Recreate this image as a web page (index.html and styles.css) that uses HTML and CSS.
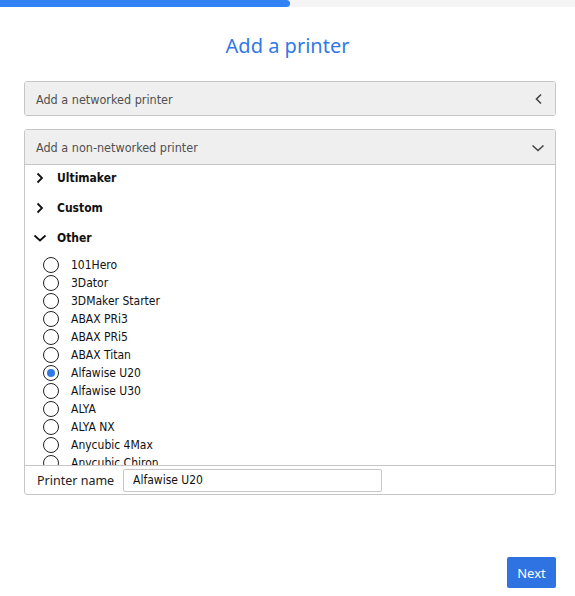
FILE: index.html
```html
<!DOCTYPE html>
<html>
<head>
<meta charset="utf-8">
<link rel="stylesheet" href="styles.css">
</head>
<body>
<div class="progress"><div class="progress-fill"></div></div>
<h1 class="title">Add a printer</h1>
<div class="content">
  <div class="section">
    <div class="section-header">
      <span>Add a networked printer</span>
      <svg class="chev" width="12" height="12" viewBox="0 0 12 12"><path d="M8 1.5 L3.5 6 L8 10.5" fill="none" stroke="#444" stroke-width="1.6"/></svg>
    </div>
  </div>
  <div class="section open">
    <div class="section-header">
      <span>Add a non-networked printer</span>
      <svg class="chev" width="14" height="12" viewBox="0 0 14 12"><path d="M1.5 3.5 L7 8.5 L12.5 3.5" fill="none" stroke="#444" stroke-width="1.6"/></svg>
    </div>
    <div class="list">
      <div class="tree-row">
        <svg class="tchev" width="10" height="12" viewBox="0 0 10 12"><path d="M2.5 1.5 L7 6 L2.5 10.5" fill="none" stroke="#111" stroke-width="1.8"/></svg>
        <span>Ultimaker</span>
      </div>
      <div class="tree-row">
        <svg class="tchev" width="10" height="12" viewBox="0 0 10 12"><path d="M2.5 1.5 L7 6 L2.5 10.5" fill="none" stroke="#111" stroke-width="1.8"/></svg>
        <span>Custom</span>
      </div>
      <div class="tree-row">
        <svg class="tchev down" width="14" height="12" viewBox="0 0 14 12"><path d="M1.5 3.5 L7 8.5 L12.5 3.5" fill="none" stroke="#111" stroke-width="1.8"/></svg>
        <span>Other</span>
      </div>
      <div class="radios">
        <div class="radio"><span class="dot"></span>101Hero</div>
        <div class="radio"><span class="dot"></span>3Dator</div>
        <div class="radio"><span class="dot"></span>3DMaker Starter</div>
        <div class="radio"><span class="dot"></span>ABAX PRi3</div>
        <div class="radio"><span class="dot"></span>ABAX PRi5</div>
        <div class="radio"><span class="dot"></span>ABAX Titan</div>
        <div class="radio checked"><span class="dot"></span>Alfawise U20</div>
        <div class="radio"><span class="dot"></span>Alfawise U30</div>
        <div class="radio"><span class="dot"></span>ALYA</div>
        <div class="radio"><span class="dot"></span>ALYA NX</div>
        <div class="radio"><span class="dot"></span>Anycubic 4Max</div>
        <div class="radio"><span class="dot"></span>Anycubic Chiron</div>
      </div>
    </div>
    <div class="footer">
      <label class="name-label">Printer name</label>
      <input class="name-input" type="text" value="Alfawise U20">
    </div>
  </div>
</div>
<div class="actions"><button class="next">Next</button></div>
</body>
</html>
```
FILE: styles.css
```css
html, body {
  margin: 0;
  padding: 0;
  background: #fff;
}
body {
  width: 575px;
  height: 596px;
  font-family: "DejaVu Sans Condensed", "DejaVu Sans", sans-serif;
  font-size: 12px;
  color: #111;
  overflow: hidden;
}
.progress {
  height: 7px;
  background: #f4f4f4;
}
.progress-fill {
  width: 290px;
  height: 7px;
  background: #3282f6;
  border-radius: 0 4px 4px 0;
}
.title {
  margin: 25px 0 0 0;
  height: 28px;
  line-height: 28px;
  text-align: center;
  font-family: "Noto Sans", "Open Sans", sans-serif;
  font-weight: normal;
  font-size: 20px;
  color: #3179e6;
}
.content {
  margin: 21px 19px 0 24px;
  display: flex;
  flex-direction: column;
  gap: 13px;
}
.section {
  border: 1px solid #c6c6c6;
  border-radius: 3px;
  overflow: hidden;
}
.section-header {
  box-sizing: border-box;
  height: 33px;
  background: #efefef;
  display: flex;
  align-items: center;
  justify-content: space-between;
  padding: 1px 10px 0 11px;
  color: #505050;
  font-size: 12.5px;
}
.open .section-header {
  height: 35px;
  border-bottom: 1px solid #c6c6c6;
}
.chev { display: block; }
.list {
  height: 299px;
  padding-top: 1px;
  overflow: hidden;
}
.tree-row {
  height: 24px;
  margin-bottom: 6px;
  display: flex;
  align-items: center;
  font-weight: bold;
  font-size: 12px;
  color: #111;
}
.tchev {
  margin-left: 10px;
  width: 10px;
  margin-right: 12px;
}
.tchev.down {
  margin-left: 8px;
  width: 14px;
  margin-right: 10px;
}
.radio {
  height: 18px;
  display: flex;
  align-items: center;
  padding-left: 18px;
  font-size: 12px;
  color: #111;
}
.dot {
  width: 14px;
  height: 14px;
  border: 1.3px solid #222;
  border-radius: 50%;
  margin-right: 12px;
  position: relative;
  flex-shrink: 0;
}
.checked .dot::after {
  content: "";
  position: absolute;
  left: 3px;
  top: 3px;
  width: 8px;
  height: 8px;
  border-radius: 50%;
  background: #2f7ae5;
}
.footer {
  height: 28px;
  border-top: 1px solid #c6c6c6;
  display: flex;
  align-items: center;
  padding-left: 12px;
  gap: 12px;
}
.name-label {
  width: 74px;
  white-space: nowrap;
  font-family: "Noto Sans", "Open Sans", sans-serif;
  font-size: 12.5px;
  color: #222;
}
.name-input {
  width: 259px;
  height: 23px;
  box-sizing: border-box;
  border: 1px solid #c6c6c6;
  border-radius: 2px;
  padding: 0 9px;
  font-family: "DejaVu Sans Condensed", "DejaVu Sans", sans-serif;
  font-size: 12px;
  color: #111;
  outline: none;
}
.actions {
  display: flex;
  justify-content: flex-end;
  margin: 62px 19px 0 0;
}
.next {
  width: 49px;
  height: 31px;
  border: none;
  border-radius: 2px;
  background: #2f73e2;
  color: #fff;
  font-family: "Noto Sans", "Open Sans", sans-serif;
  font-size: 13px;
  padding: 0;
}
```
